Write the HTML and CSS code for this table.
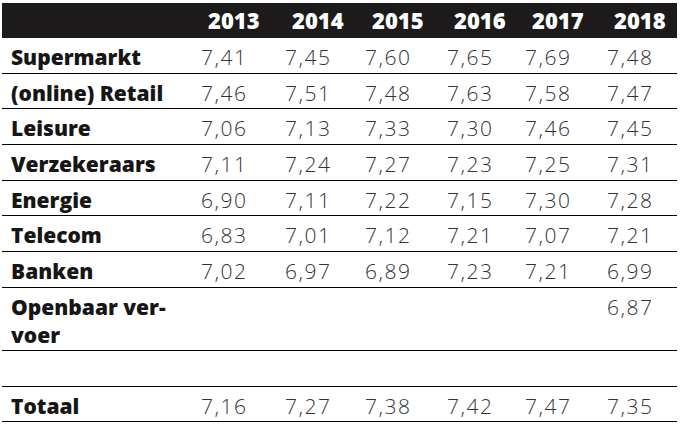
FILE: index.html
```html
<!DOCTYPE html>
<html lang="nl">
<head>
<meta charset="utf-8">
<link rel="stylesheet" href="styles.css">
</head>
<body>
<div class="table">
  <div class="row head">
    <div class="cell label"></div>
    <div class="cell year">2013</div>
    <div class="cell year">2014</div>
    <div class="cell year">2015</div>
    <div class="cell year">2016</div>
    <div class="cell year">2017</div>
    <div class="cell year">2018</div>
  </div>
  <div class="row">
    <div class="cell label">Supermarkt</div>
    <div class="cell num">7,41</div><div class="cell num">7,45</div><div class="cell num">7,60</div><div class="cell num">7,65</div><div class="cell num">7,69</div><div class="cell num">7,48</div>
  </div>
  <div class="row">
    <div class="cell label">(online) Retail</div>
    <div class="cell num">7,46</div><div class="cell num">7,51</div><div class="cell num">7,48</div><div class="cell num">7,63</div><div class="cell num">7,58</div><div class="cell num">7,47</div>
  </div>
  <div class="row">
    <div class="cell label">Leisure</div>
    <div class="cell num">7,06</div><div class="cell num">7,13</div><div class="cell num">7,33</div><div class="cell num">7,30</div><div class="cell num">7,46</div><div class="cell num">7,45</div>
  </div>
  <div class="row">
    <div class="cell label">Verzekeraars</div>
    <div class="cell num">7,11</div><div class="cell num">7,24</div><div class="cell num">7,27</div><div class="cell num">7,23</div><div class="cell num">7,25</div><div class="cell num">7,31</div>
  </div>
  <div class="row">
    <div class="cell label">Energie</div>
    <div class="cell num">6,90</div><div class="cell num">7,11</div><div class="cell num">7,22</div><div class="cell num">7,15</div><div class="cell num">7,30</div><div class="cell num">7,28</div>
  </div>
  <div class="row">
    <div class="cell label">Telecom</div>
    <div class="cell num">6,83</div><div class="cell num">7,01</div><div class="cell num">7,12</div><div class="cell num">7,21</div><div class="cell num">7,07</div><div class="cell num">7,21</div>
  </div>
  <div class="row">
    <div class="cell label">Banken</div>
    <div class="cell num">7,02</div><div class="cell num">6,97</div><div class="cell num">6,89</div><div class="cell num">7,23</div><div class="cell num">7,21</div><div class="cell num">6,99</div>
  </div>
  <div class="row tall">
    <div class="cell label">Openbaar ver&shy;voer</div>
    <div class="cell num"></div><div class="cell num"></div><div class="cell num"></div><div class="cell num"></div><div class="cell num"></div><div class="cell num">6,87</div>
  </div>
  <div class="row empty">
    <div class="cell label"></div>
  </div>
  <div class="row total">
    <div class="cell label">Totaal</div>
    <div class="cell num">7,16</div><div class="cell num">7,27</div><div class="cell num">7,38</div><div class="cell num">7,42</div><div class="cell num">7,47</div><div class="cell num">7,35</div>
  </div>
</div>
</body>
</html>
```

FILE: styles.css
```css
html, body {
  margin: 0;
  padding: 0;
  background: #ffffff;
}

body {
  padding: 3px 0 0 2px;
}

.table {
  width: 675px;
  font-family: "Open Sans", "Liberation Sans", sans-serif;
}

.row {
  display: grid;
  grid-template-columns: 198px 84px 80px 82px 78px 82px 1fr;
  height: 35.7px;
  box-sizing: border-box;
  border-bottom: 1px solid #000000;
}

.row.head {
  height: 35px;
  background: #1c1a1a;
  border-bottom: none;
}

.row.tall {
  height: 63px;
}

.row.empty {
  height: 36px;
}

.row.total {
  height: 35px;
}

.cell {
  padding: 5px 0 0 1px;
  line-height: 28px;
  white-space: nowrap;
}

.cell.label {
  padding-left: 9px;
  padding-right: 10px;
  font-size: 21px;
  font-weight: 800;
  color: #161616;
  white-space: normal;
}

.cell.year {
  padding-top: 3px;
  padding-left: 8px;
  font-size: 22px;
  font-weight: 800;
  color: #ffffff;
}

.cell.num {
  font-size: 21px;
  font-weight: 300;
  letter-spacing: 1.5px;
  color: #333333;
}
```
